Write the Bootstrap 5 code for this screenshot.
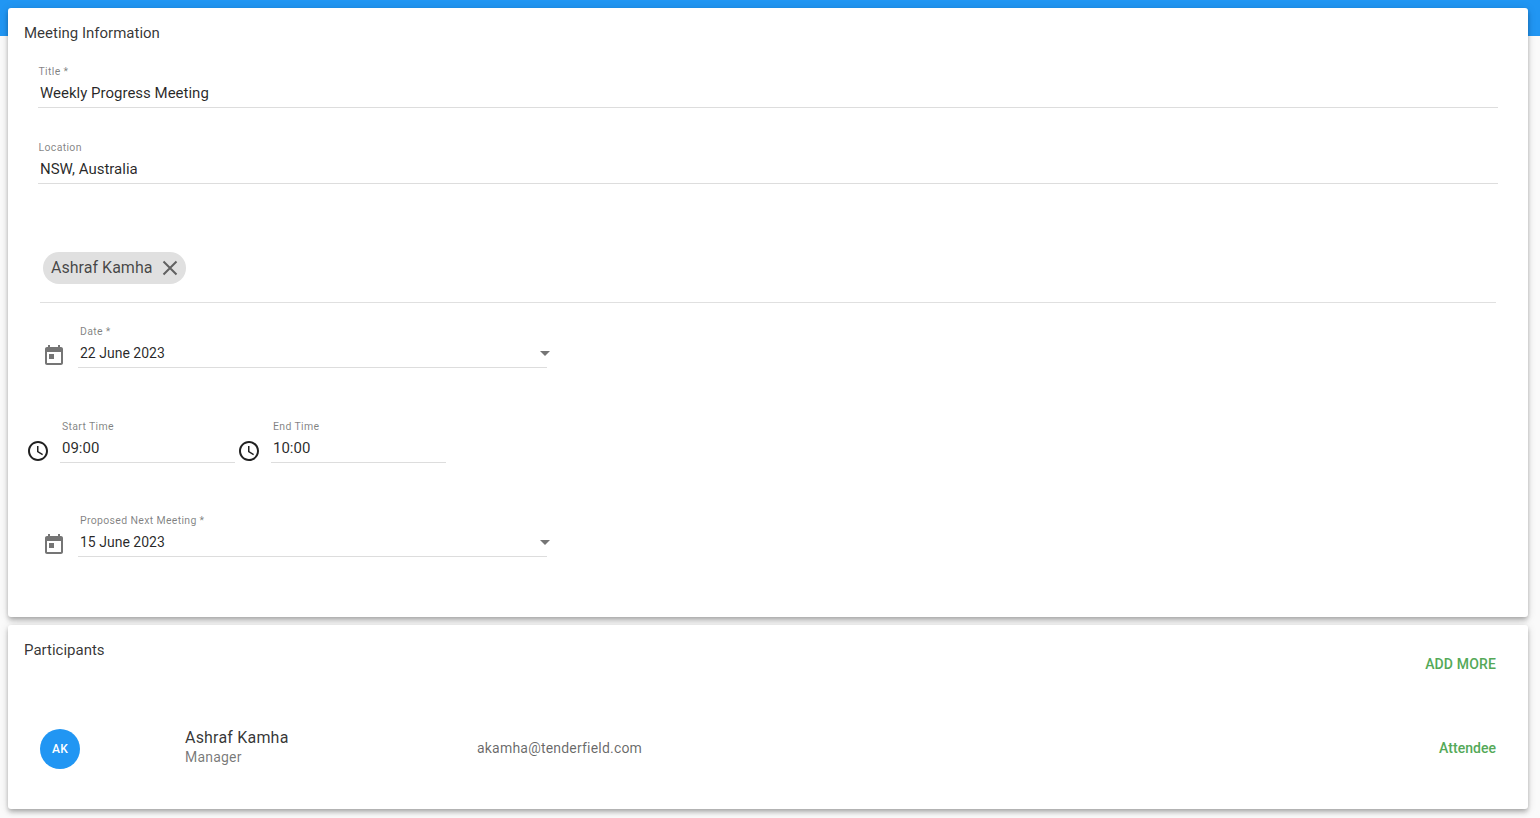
<!DOCTYPE html>
<html lang="en">
<head>
<meta charset="utf-8">
<title>Meeting</title>
<link href="https://cdn.jsdelivr.net/npm/bootstrap@5.3.0/dist/css/bootstrap.min.css" rel="stylesheet">
<style>
html,body{height:100%}
body{background:#fafafa;font-family:Roboto,sans-serif;color:rgba(0,0,0,.87);overflow:hidden}
.top-band{position:absolute;top:0;left:0;right:0;height:36px;background:#2196f3;z-index:0}
.page-wrap{position:relative;z-index:1;padding:8px 12px 0 8px}
.sheet{border:0;border-radius:3px;background:#fff;box-shadow:0 2px 4px -1px rgba(0,0,0,.2),0 4px 5px 0 rgba(0,0,0,.14),0 1px 10px 0 rgba(0,0,0,.12)}
.sheet-info{padding:13px 30px 60px 16px;margin-bottom:8px}
.sheet-part{padding:13px 32px 40px 16px}
.sheet-title{font-size:15px;line-height:24px;color:rgba(0,0,0,.8)}
.fld-label{font-size:10.5px;line-height:16px;color:rgba(0,0,0,.5);letter-spacing:.33px;height:17px;padding:1px 0 0 2px}
.fld-val{font-size:15px;line-height:24px;padding:1px 2px 2px;border-bottom:1px solid #ddd;color:rgba(0,0,0,.85)}
.fld-val.small-val{font-size:14px}
.fld-plain{margin-left:14px}
.fld-plain .fld-label{padding-left:.5px}
.gap-title{margin-top:18px}
.gap-loc{margin-top:31px}
.chip-zone{margin:68px 2px 0 16px;padding-bottom:18px;border-bottom:1px solid #e0e0e0}
.name-chip{height:32px;margin-left:3px;padding:0 8px 0 8px;border-radius:16px;background:#e0e0e0;font-size:16px;color:rgba(0,0,0,.7);letter-spacing:.03px;column-gap:9px}
.date-row{margin-left:18px;width:505px;column-gap:12px;margin-top:20px}
.date-row.next{margin-top:49px}
.date-row .fld-grow{flex:1}
.tri{width:0;height:0;border-left:5.5px solid transparent;border-right:5.5px solid transparent;border-top:5.5px solid #757575;margin-right:-5px;margin-top:1px}
.time-row{margin-left:2px;margin-top:50px}
.time-a{width:175px;margin-left:10px}
.time-b{width:175px;margin-left:10px}
.clock-b{margin-left:2px}
.ico-grey{fill:#757575;display:block}
.ico-dark{fill:#212121;display:block}
.add-more{margin-top:16px;font-size:14px;line-height:20px;font-weight:500;color:#54a958;letter-spacing:.15px}
.people-row{margin-top:55px;margin-left:16px}
.avatar-wrap{width:145px}
.avatar-disc{width:40px;height:40px;background:#2196f3;color:#fff;font-size:12px;font-weight:500;letter-spacing:.3px}
.who{width:292px;margin-top:-4px}
.who-name{font-size:16px;line-height:20px;letter-spacing:.2px;color:rgba(0,0,0,.8)}
.who-role{font-size:14px;line-height:18px;letter-spacing:.2px;color:rgba(0,0,0,.54)}
.who-mail{font-size:14px;letter-spacing:.2px;color:rgba(0,0,0,.6);margin-bottom:2px}
.who-kind{font-size:14px;font-weight:500;color:#54a958;letter-spacing:.03px;margin-bottom:2px}
</style>
</head>
<body>
<div class="top-band"></div>
<div class="page-wrap">
  <section class="card sheet sheet-info">
    <div class="sheet-title ps-0">Meeting Information</div>
    <div class="fld-plain gap-title">
      <div class="fld-label">Title *</div>
      <div class="fld-val">Weekly Progress Meeting</div>
    </div>
    <div class="fld-plain gap-loc">
      <div class="fld-label">Location</div>
      <div class="fld-val">NSW, Australia</div>
    </div>
    <div class="chip-zone">
      <span class="name-chip d-inline-flex align-items-center">Ashraf Kamha
        <svg width="16" height="16" viewBox="0 0 16 16" aria-hidden="true"><path d="M1.5 1.5l13 13M14.5 1.5l-13 13" stroke="#616161" stroke-width="2" fill="none"/></svg>
      </span>
    </div>
    <div class="d-flex align-items-end date-row">
      <svg class="ico-grey" width="24" height="24" viewBox="0 0 24 24" aria-hidden="true"><path d="M19 3h-1V1h-2v2H8V1H6v2H5c-1.11 0-1.99.9-1.99 2L3 19c0 1.1.89 2 2 2h14c1.1 0 2-.9 2-2V5c0-1.1-.9-2-2-2zm0 16H5V8h14v11zM7 10h5v5H7z"/></svg>
      <div class="fld-grow">
        <div class="fld-label">Date *</div>
        <div class="fld-val small-val d-flex justify-content-between align-items-center"><span>22 June 2023</span><span class="tri"></span></div>
      </div>
    </div>
    <div class="d-flex align-items-end time-row">
      <svg class="ico-dark" width="24" height="24" viewBox="0 0 24 24" aria-hidden="true"><path d="M11.99 2C6.47 2 2 6.48 2 12s4.47 10 9.99 10C17.52 22 22 17.52 22 12S17.52 2 11.99 2zM12 20c-4.42 0-8-3.58-8-8s3.58-8 8-8 8 3.58 8 8-3.58 8-8 8zm.5-13H11v6l5.25 3.15.75-1.23-4.5-2.67z"/></svg>
      <div class="time-a">
        <div class="fld-label">Start Time</div>
        <div class="fld-val">09:00</div>
      </div>
      <svg class="ico-dark clock-b" width="24" height="24" viewBox="0 0 24 24" aria-hidden="true"><path d="M11.99 2C6.47 2 2 6.48 2 12s4.47 10 9.99 10C17.52 22 22 17.52 22 12S17.52 2 11.99 2zM12 20c-4.42 0-8-3.58-8-8s3.58-8 8-8 8 3.58 8 8-3.58 8-8 8zm.5-13H11v6l5.25 3.15.75-1.23-4.5-2.67z"/></svg>
      <div class="time-b">
        <div class="fld-label">End Time</div>
        <div class="fld-val">10:00</div>
      </div>
    </div>
    <div class="d-flex align-items-end date-row next">
      <svg class="ico-grey" width="24" height="24" viewBox="0 0 24 24" aria-hidden="true"><path d="M19 3h-1V1h-2v2H8V1H6v2H5c-1.11 0-1.99.9-1.99 2L3 19c0 1.1.89 2 2 2h14c1.1 0 2-.9 2-2V5c0-1.1-.9-2-2-2zm0 16H5V8h14v11zM7 10h5v5H7z"/></svg>
      <div class="fld-grow">
        <div class="fld-label">Proposed Next Meeting *</div>
        <div class="fld-val small-val d-flex justify-content-between align-items-center"><span>15 June 2023</span><span class="tri"></span></div>
      </div>
    </div>
  </section>
  <section class="card sheet sheet-part">
    <div class="d-flex justify-content-between align-items-start">
      <div class="sheet-title">Participants</div>
      <div class="add-more">ADD MORE</div>
    </div>
    <div class="d-flex align-items-center people-row">
      <div class="avatar-wrap"><div class="avatar-disc rounded-circle d-flex align-items-center justify-content-center">AK</div></div>
      <div class="who">
        <div class="who-name">Ashraf Kamha</div>
        <div class="who-role">Manager</div>
      </div>
      <div class="who-mail">akamha@tenderfield.com</div>
      <div class="who-kind ms-auto">Attendee</div>
    </div>
  </section>
</div>
<script src="https://cdn.jsdelivr.net/npm/bootstrap@5.3.0/dist/js/bootstrap.bundle.min.js"></script>
</body>
</html>
